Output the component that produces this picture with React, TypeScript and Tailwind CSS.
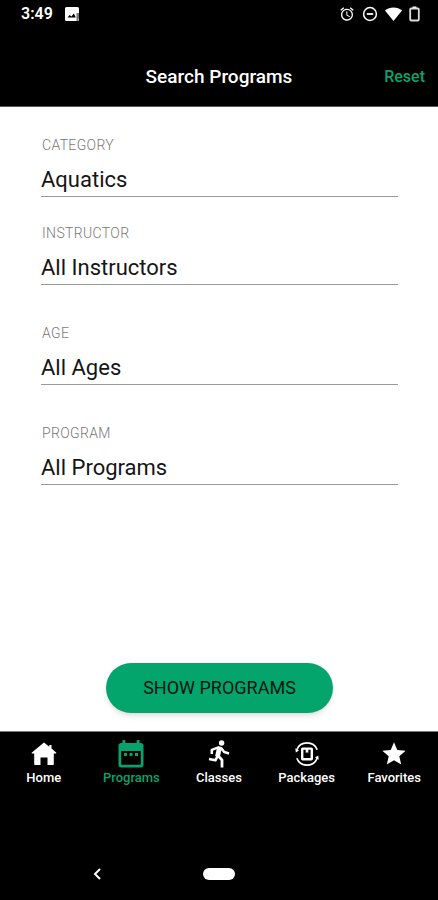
import { useState } from "react";
import { MdAlarm, MdStar } from "react-icons/md";
import clsx from "clsx";

interface Field {
  id: string;
  label: string;
  options: string[];
  className?: string;
}

const fields: Field[] = [
  { id: "category", label: "CATEGORY", options: ["Aquatics"] },
  {
    id: "instructor",
    label: "INSTRUCTOR",
    options: ["All Instructors"],
    className: "mt-7",
  },
  { id: "age", label: "AGE", options: ["All Ages"], className: "mt-10" },
  {
    id: "program",
    label: "PROGRAM",
    options: ["All Programs"],
    className: "mt-10",
  },
];

function PhotoIcon() {
  return (
    <svg viewBox="0 0 14 14" className="size-3.5" aria-hidden="true">
      <rect width="14" height="14" rx="1.5" fill="#fff" />
      <path d="M2.5 10.5 4.6 8l1.8 1.6L8.8 6.5l2 4z" fill="#000" />
      <path d="M11.5 6H14v5l-1 3h-1.5z" fill="#777" />
    </svg>
  );
}

function DndIcon() {
  return (
    <svg viewBox="0 0 16 16" className="size-4" fill="none" stroke="currentColor" aria-hidden="true">
      <circle cx="8" cy="8" r="6.4" strokeWidth="1.5" />
      <path d="M4.8 8h6.4" strokeWidth="1.8" />
    </svg>
  );
}

function WifiIcon() {
  return (
    <svg viewBox="0 0 17 14" className="h-3.5 w-[17px]" fill="currentColor" aria-hidden="true">
      <path d="M8.5 14 0 3.6C2.3 1.5 5.2.4 8.5.4s6.2 1.1 8.5 3.2z" />
    </svg>
  );
}

function BatteryIcon() {
  return (
    <svg viewBox="0 0 11 16" className="h-4 w-[11px]" aria-hidden="true">
      <path d="M3.5 .5h4v2h-4z" fill="#fff" />
      <rect x="1.2" y="2.5" width="8.6" height="12" rx="1" fill="none" stroke="#ddd" strokeWidth="1.8" />
    </svg>
  );
}

function HomeIcon() {
  return (
    <svg viewBox="0 0 26 24" className="h-6 w-[26px]" fill="currentColor" aria-hidden="true">
      <path d="M13 .5.9 10.4c-.5.5-.2 1.2.5 1.2h1.8v10.5c0 .6.4 1 1 1h5.3v-7.5h7v7.5h5.3c.6 0 1-.4 1-1V11.6h1.8c.7 0 1-.7.5-1.2L20.5 6.6V3h-2.2v1.8z" />
    </svg>
  );
}

function CalendarIcon() {
  return (
    <svg viewBox="0 0 26 28" className="h-7 w-[26px]" aria-hidden="true">
      <path
        fill="currentColor"
        fillRule="evenodd"
        d="M4.5 0h2.8v3h11.4V0h2.8v3h1.3A2.7 2.7 0 0 1 25.5 5.7v19.1a2.7 2.7 0 0 1-2.7 2.7H3.2A2.7 2.7 0 0 1 .5 24.8V5.7A2.7 2.7 0 0 1 3.2 3h1.3zM3.2 11v12.8c0 .6.4 1 1 1h17.600c.6 0 1-.4 1-1V11z"
      />
      <path fill="currentColor" d="M6 13h3v3H6zM11.500 13h3v3h-3zM17 13h3v3h-3z" />
    </svg>
  );
}

function RunnerIcon() {
  return (
    <svg viewBox="0 0 22 28" className="h-7 w-[22px]" fill="none" stroke="currentColor" aria-hidden="true">
      <circle cx="13.6" cy="3" r="2.7" fill="currentColor" stroke="none" />
      <path d="M11.3 8.5 9.5 16.5" strokeWidth="4.8" />
      <path d="M3.8 14V9.8L10.5 7.3 13.5 8.5 16.2 12 21 13.5" strokeWidth="2.5" strokeLinejoin="round" />
      <path d="M9.5 16 7.5 20.3 1 19" strokeWidth="2.7" strokeLinejoin="round" />
      <path d="M9.8 15.5 14 20v7.5" strokeWidth="2.8" strokeLinejoin="round" />
    </svg>
  );
}

function PackageIcon() {
  return (
    <svg viewBox="0 0 24 24" className="size-6" fill="none" stroke="currentColor" aria-hidden="true">
      <path d="M1.8 7.8A11 11 0 0 1 22.2 7.8M22.2 16.2A11 11 0 0 1 1.8 16.2" strokeWidth="1.700" />
      <path d="M.3 6.200 4 8.400.8 10.500zM23.700 17.800 20 15.600l3.200-2.100z" fill="currentColor" stroke="none" />
      <rect x="7.200" y="6.600" width="9.600" height="10.600" rx=".5" strokeWidth="2.400" />
      <path d="M10.700 7h2.600v4l-1.300-.8-1.300.8z" fill="currentColor" stroke="none" />
    </svg>
  );
}

const tabs = [
  { name: "Home", icon: <HomeIcon /> },
  { name: "Programs", icon: <CalendarIcon /> },
  { name: "Classes", icon: <RunnerIcon /> },
  { name: "Packages", icon: <PackageIcon /> },
  { name: "Favorites", icon: <MdStar size={28} /> },
];

function SelectField({ id, label, options, className }: Field) {
  return (
    <div className={clsx("flex flex-col gap-[11px]", className)}>
      <label htmlFor={id} className="pl-px text-sm leading-4 font-light tracking-wide text-[#777]">
        {label}
      </label>
      <select
        id={id}
        className="h-[33px] w-full appearance-none rounded-none border-b border-[#999] bg-transparent text-[22px] leading-8 text-[#151515] outline-none"
      >
        {options.map((option) => (
          <option key={option}>{option}</option>
        ))}
      </select>
    </div>
  );
}

export default function App() {
  const [active, setActive] = useState("Programs");

  return (
    <div className="flex min-h-screen flex-col bg-white font-['Roboto',sans-serif]">
      <header className="bg-black text-white">
        <div className="flex h-7 items-center justify-between pr-[18px] pl-[21px]">
          <div className="flex items-center gap-3">
            <span className="text-base font-semibold">3:49</span>
            <PhotoIcon />
          </div>
          <div className="flex items-center gap-[7px]">
            <MdAlarm size={16} />
            <DndIcon />
            <WifiIcon />
            <BatteryIcon />
          </div>
        </div>
        <div className="grid h-[79px] grid-cols-[1fr_auto_1fr] items-center border-b border-[#555] px-[13px] pt-5">
          <h1 className="col-start-2 text-[19px] font-medium">Search Programs</h1>
          <button type="reset" form="search" className="justify-self-end text-base font-medium text-[#08a36c]">
            Reset
          </button>
        </div>
      </header>

      <form
        id="search"
        className="flex flex-1 flex-col pt-[30px] pr-10 pb-[18px] pl-[41px]"
        onSubmit={(e) => e.preventDefault()}
      >
        {fields.map((field) => (
          <SelectField key={field.id} {...field} />
        ))}
        <button
          type="submit"
          className="mt-auto h-[50px] self-center rounded-full bg-[#04a56c] px-[37px] text-lg text-[#04160f] shadow-md"
        >
          SHOW PROGRAMS
        </button>
      </form>

      <footer className="border-t border-[#777] bg-black text-white">
        <nav className="grid grid-cols-5 pt-1.5">
          {tabs.map((tab) => (
            <button
              key={tab.name}
              type="button"
              onClick={() => setActive(tab.name)}
              className={clsx(
                "flex flex-col items-center",
                tab.name === active && "text-[#08a36c]",
              )}
            >
              <span className="flex h-8 items-center">{tab.icon}</span>
              <span className="text-[13px] leading-4 font-medium">{tab.name}</span>
            </button>
          ))}
        </nav>
        <div className="grid grid-cols-[1fr_auto_1fr] items-center gap-[102px] pt-[82px] pb-5">
          <button type="button" aria-label="Back" className="justify-self-end">
            <svg viewBox="0 0 8 12" className="h-3 w-2" fill="none" stroke="currentColor" strokeWidth="2">
              <path d="M7 1 2 6l5 5" />
            </svg>
          </button>
          <button type="button" aria-label="Home screen" className="h-3 w-8 rounded-full bg-white" />
        </div>
      </footer>
    </div>
  );
}
